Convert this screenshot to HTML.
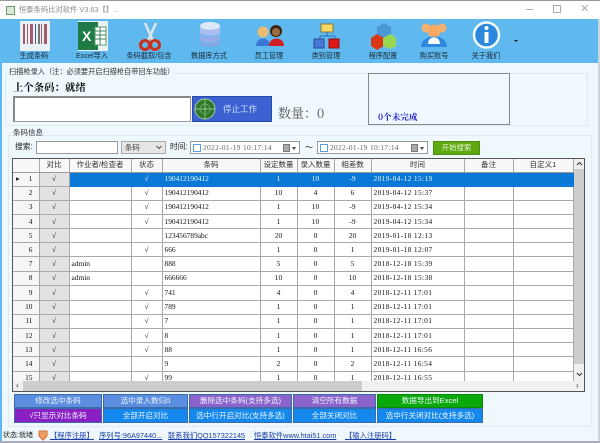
<!DOCTYPE html>
<html><head><meta charset="utf-8"><style>
html,body{margin:0;padding:0;width:600px;height:443px;overflow:hidden;background:#eff8fc}
*{box-sizing:border-box}
body{position:relative;font-family:"Liberation Sans","WenQuanYi Zen Hei","Noto Sans CJK SC",sans-serif;font-size:7.5px;color:#222}
.a{position:absolute;white-space:nowrap}
.tl{font-size:7.2px;text-align:center;color:#1c2a38;width:70px;top:50px;line-height:12px}
table{border-collapse:collapse;table-layout:fixed;position:absolute;left:13px;top:159px;width:560px}
td,th{padding:0;height:14.17px;line-height:12px;border-right:1px solid #a8a8a8;border-bottom:1px solid #aaa;text-align:center;font:400 7.4px/12px "Liberation Serif",serif;color:#111;overflow:hidden;white-space:nowrap;background:#fff}
tr:nth-child(10) td{height:15px}
th{height:13px;font:400 7.5px/12px "Liberation Sans","WenQuanYi Zen Hei","Noto Sans CJK SC",sans-serif;background:#f8f8f8;color:#333;border-bottom:1px solid #999}
td.n{background:#f6f6f6;text-align:right;padding-right:6px;border-right:1px solid #a8a8a8}
td.c{background:#e2e2e2;border:1px solid #f6f6f6;border-right:1px solid #a8a8a8;border-bottom:1px solid #aaa}
td.l{text-align:left;padding-left:2px}
td.d{text-align:left;padding-left:2px;letter-spacing:.37px}
tr.s td:not(.n):not(.c){background:#0a78d6;color:#e8f4ff;border-color:#0a78d6}
.b{position:absolute;color:#eef6ff;text-align:center;font-size:7.6px;line-height:12px;border:1px solid #3b6ca8;white-space:nowrap;overflow:hidden}
.lk{color:#1a3ea8;text-decoration:underline}
.ip{position:absolute;background:#fff;border:1px solid #9a9a9a}
.dt{position:absolute;background:#fff;border:1px solid #9a9a9a;height:13px;font:7.4px/11px "Liberation Serif",serif;letter-spacing:.33px;color:#666;padding-left:12px}
.dt i{position:absolute;left:2px;top:2px;width:8px;height:8px;border:1px solid #5a9fd8;background:#fff}
.dt b{position:absolute;right:9px;top:2px;width:7px;height:8px;background:#aaa;border:1px solid #777}
.dt u{position:absolute;right:3px;top:5px;border:2.5px solid transparent;border-top:3px solid #444;border-bottom:0}
.fs{position:absolute;border:1px solid #dfe9ee}
</style></head><body>
<div class="a" style="left:0;top:0;width:600px;height:19px;background:#fff;border-top:1px solid #999"></div>
<div class="a" style="left:6px;top:6px;width:9px;height:9px;background:#dfe8d8;border:1px solid #6a9a70"></div>
<div class="a" style="left:19px;top:4px;font-size:7.3px;line-height:12px;color:#8b8b8b">恒泰条码比对软件 V3.63【】..</div>
<div class="a" style="left:526px;top:9px;width:7px;height:1px;background:#aaa"></div>
<div class="a" style="left:553px;top:5px;width:8px;height:8px;border:1px solid #aaa"></div>
<div class="a" style="left:580px;top:2px;font-size:11px;line-height:15px;color:#aaa">✕</div>
<div class="a" style="left:0;top:19px;width:600px;height:44px;background:#5fb9ef"></div>
<div class="a" style="left:0;top:19px;width:2px;height:424px;background:#5fb9ef"></div>
<div class="a" style="left:598px;top:19px;width:2px;height:424px;background:#c9d6dc"></div>
<div class="a" style="left:0;top:441px;width:600px;height:2px;background:#aab"></div>
<svg class="a" style="left:0;top:19px" width="600" height="32" viewBox="0 19 600 32">
<rect x="20" y="21" width="30" height="30" fill="#e8f2f6"/>
<g fill="#a85a6a"><rect x="23" y="24" width="2" height="20"/><rect x="27" y="24" width="1" height="20"/><rect x="30" y="24" width="3" height="20"/><rect x="35" y="24" width="1" height="20" fill="#558"/><rect x="38" y="24" width="2" height="20" fill="#777"/><rect x="41" y="24" width="1" height="20"/><rect x="44" y="24" width="3" height="20"/></g>
<rect x="78" y="21" width="30" height="30" fill="#e8f2f6"/><rect x="78" y="22" width="20" height="28" fill="#1f7a45"/><rect x="95" y="27" width="11" height="18" fill="#fff" stroke="#5a9a70"/><path d="M95 31h11M95 35h11M95 39h11M100 27v18" stroke="#3d8a58"/><text x="82" y="41" font-size="14" font-weight="700" fill="#fff" font-family="Liberation Sans">X</text>
<path d="M145 23l9 20M156 23l-9 20" stroke="#dfe4ea" stroke-width="2.5" fill="none"/><circle cx="145" cy="45" r="4.5" fill="none" stroke="#c8321e" stroke-width="3"/><circle cx="155" cy="45" r="4.5" fill="none" stroke="#c8321e" stroke-width="3"/>
<ellipse cx="210" cy="26" rx="10" ry="4" fill="#dfe8f8"/><path d="M200 26v6c0 5 20 5 20 0v-6c0 5-20 5-20 0z" fill="#a9bdee"/><path d="M200 33v6c0 5 20 5 20 0v-6c0 5-20 5-20 0z" fill="#96aee8"/><path d="M200 40v3c0 5 20 5 20 0v-3c0 5-20 5-20 0z" fill="#8aa4e4"/>
<circle cx="263" cy="32" r="5.5" fill="#eebc70"/><path d="M256 46c0-10 14-10 14 0z" fill="#3a78d8"/><circle cx="276" cy="31" r="6" fill="#3a2418"/><circle cx="276" cy="32" r="4" fill="#a06a3a"/><path d="M269 46c0-10 15-10 15 0z" fill="#d01f24"/>
<rect x="321" y="24" width="12" height="8" fill="#f6d860" stroke="#8a7a30"/><path d="M327 32v4M320 36h15M320 36v3M335 36v3" stroke="#2f6ab0" fill="none"/><rect x="314" y="39" width="10" height="9" fill="#4a78d8" stroke="#2a4a90"/><rect x="329" y="39" width="10" height="9" fill="#e01818" stroke="#901010"/>
<path d="M377 27l7-4 7 4v8l-7 4-7-4z" fill="#4a98d8"/><path d="M371 38l6-4 7 4v8l-7 4-6-4z" fill="#d83818"/><path d="M383 38l7-4 6 4v8l-6 3-7-3z" fill="#98d850"/>
<circle cx="434" cy="31" r="6.500" fill="#f8a860"/><circle cx="442" cy="28" r="4.500" fill="#f6b070"/><circle cx="426" cy="28" r="4.500" fill="#f6b070"/><path d="M421 47c0-14 26-14 26 0z" fill="#2f88e0"/><path d="M428 44c0-9 12-9 12 0z" fill="#f4f8ff"/>
<circle cx="486.500" cy="35" r="12.500" fill="#2a88dd" stroke="#f2f8fc" stroke-width="2.500"/><circle cx="486.500" cy="28" r="2" fill="#fff"/><rect x="484.500" y="32" width="4" height="11" fill="#fff"/>
<path d="M514 40h4l-2 2z" fill="#111"/>
</svg>
<div class="a tl" style="left:-1px">生成条码</div>
<div class="a tl" style="left:57px">Excel导入</div>
<div class="a tl" style="left:114px">条码截取/包含</div>
<div class="a tl" style="left:174px">数据库方式</div>
<div class="a tl" style="left:234px">员工管理</div>
<div class="a tl" style="left:291px">类别管理</div>
<div class="a tl" style="left:348px">程序配置</div>
<div class="a tl" style="left:399px">购买账号</div>
<div class="a tl" style="left:451px">关于我们</div>

<div class="fs" style="left:5px;top:73px;width:583px;height:53px"></div>
<div class="a" style="left:9px;top:66px;font-size:7.2px;line-height:12px;background:#eff8fc;color:#333">扫描枪录入（注：必须要开启扫描枪自带回车功能）</div>
<div class="a" style="left:13px;top:79px;font:700 10.4px/16px 'Noto Serif CJK SC',serif;color:#111">上个条码：就绪</div>
<div class="ip" style="left:13px;top:96px;width:178px;height:26px;border-top:2px solid #888;border-left:2px solid #888"></div>
<div class="a" style="left:192px;top:96px;width:80px;height:26px;background:#3b62d0;border:1px solid #2a4aa8"></div>
<svg class="a" style="left:194px;top:98px" width="24" height="24"><circle cx="11" cy="11" r="10" fill="#2c7a28" stroke="#a8c8a0"/><path d="M11 1v20M1 11h20" stroke="#b8d8b0" stroke-width=".7"/><circle cx="11" cy="11" r="5" fill="none" stroke="#7ab070" stroke-width=".7"/></svg>
<div class="a" style="left:223px;top:103px;font-size:8.5px;line-height:13px;color:#cfe0fa">停止工作</div>
<div class="a" style="left:278px;top:104px;font:13px/18px 'Noto Serif CJK SC',serif;color:#555">数量：0</div>
<div class="a" style="left:368px;top:73px;width:142px;height:52px;border:1px solid #888;background:#eff8fc"></div>
<div class="a" style="left:378px;top:111px;font:700 8.6px/12px 'Noto Serif CJK SC',serif;color:#1a1ac8">0个未完成</div>

<div class="fs" style="left:8px;top:135px;width:584px;height:292px"></div>
<div class="a" style="left:13px;top:127px;font-size:7.5px;line-height:12px;background:#eff8fc;color:#333">条码信息</div>
<div class="a" style="left:15px;top:141px;font-size:7.8px;line-height:12px">搜索:</div>
<div class="ip" style="left:36px;top:141px;width:82px;height:13px"></div>
<div class="a" style="left:121px;top:141px;width:45px;height:13px;background:#e6e6e6;border:1px solid #aaa;font-size:7.4px;line-height:11px;padding-left:3px;color:#444">条码<svg style="position:absolute;right:3px;top:3px" width="6" height="5"><path d="M.5 1l2.500 2.500L5.500 1" fill="none" stroke="#555"/></svg></div>
<div class="a" style="left:170px;top:141px;font-size:7.8px;line-height:12px">时间:</div>
<div class="dt" style="left:190px;top:141px;width:110px"><i></i>2022-01-19 10:17:14<b></b><u></u></div>
<div class="a" style="left:305px;top:141px;font-size:8px;line-height:13px">～</div>
<div class="dt" style="left:317px;top:141px;width:111px"><i></i>2022-01-19 10:17:14<b></b><u></u></div>
<div class="a" style="left:433px;top:141px;width:47px;height:14px;background:#5ea812;border:1px solid #4f8f10;color:#e8f6d0;text-align:center;font-size:7.4px;line-height:12px">开始搜索</div>

<div class="a" style="left:12px;top:158px;width:573px;height:234px;border:1px solid #555;background:#fff;overflow:hidden">
<table style="left:0;top:0">
<colgroup><col style="width:26px"><col style="width:30px"><col style="width:62px"><col style="width:31px"><col style="width:98px"><col style="width:37px"><col style="width:37px"><col style="width:37px"><col style="width:93px"><col style="width:49px"><col style="width:60px"></colgroup>
<tr><th></th><th>对比</th><th>作业者/检查者</th><th>状态</th><th>条码</th><th>设定数量</th><th>录入数量</th><th>相差数</th><th>时间</th><th>备注</th><th>自定义1</th></tr>
<tr class="s"><td class="n"><span style="float:left;padding-left:3px;color:#222">▸</span>1</td><td class="c">√</td><td></td><td>√</td><td class="l">190412190412</td><td>1</td><td>10</td><td>-9</td><td class="d">2019-04-12 15:19</td><td></td><td></td></tr>
<tr><td class="n">2</td><td class="c">√</td><td></td><td>√</td><td class="l">190412190412</td><td>10</td><td>4</td><td>6</td><td class="d">2019-04-12 15:37</td><td></td><td></td></tr>
<tr><td class="n">3</td><td class="c">√</td><td></td><td>√</td><td class="l">190412190412</td><td>1</td><td>10</td><td>-9</td><td class="d">2019-04-12 15:34</td><td></td><td></td></tr>
<tr><td class="n">4</td><td class="c">√</td><td></td><td>√</td><td class="l">190412190412</td><td>1</td><td>10</td><td>-9</td><td class="d">2019-04-12 15:34</td><td></td><td></td></tr>
<tr><td class="n">5</td><td class="c">√</td><td></td><td></td><td class="l">123456789abc</td><td>20</td><td>0</td><td>20</td><td class="d">2019-01-18 12:13</td><td></td><td></td></tr>
<tr><td class="n">6</td><td class="c">√</td><td></td><td>√</td><td class="l">666</td><td>1</td><td>0</td><td>1</td><td class="d">2019-01-18 12:07</td><td></td><td></td></tr>
<tr><td class="n">7</td><td class="c">√</td><td class="l">admin</td><td></td><td class="l">888</td><td>5</td><td>0</td><td>5</td><td class="d">2018-12-18 15:39</td><td></td><td></td></tr>
<tr><td class="n">8</td><td class="c">√</td><td class="l">admin</td><td></td><td class="l">666666</td><td>10</td><td>0</td><td>10</td><td class="d">2018-12-18 15:38</td><td></td><td></td></tr>
<tr><td class="n">9</td><td class="c">√</td><td></td><td>√</td><td class="l">741</td><td>4</td><td>0</td><td>4</td><td class="d">2018-12-11 17:01</td><td></td><td></td></tr>
<tr><td class="n">10</td><td class="c">√</td><td></td><td>√</td><td class="l">789</td><td>1</td><td>0</td><td>1</td><td class="d">2018-12-11 17:01</td><td></td><td></td></tr>
<tr><td class="n">11</td><td class="c">√</td><td></td><td>√</td><td class="l">7</td><td>1</td><td>0</td><td>1</td><td class="d">2018-12-11 17:01</td><td></td><td></td></tr>
<tr><td class="n">12</td><td class="c">√</td><td></td><td>√</td><td class="l">8</td><td>1</td><td>0</td><td>1</td><td class="d">2018-12-11 17:01</td><td></td><td></td></tr>
<tr><td class="n">13</td><td class="c">√</td><td></td><td>√</td><td class="l">88</td><td>1</td><td>0</td><td>1</td><td class="d">2018-12-11 16:56</td><td></td><td></td></tr>
<tr><td class="n">14</td><td class="c">√</td><td></td><td></td><td class="l">9</td><td>2</td><td>0</td><td>2</td><td class="d">2018-12-11 16:54</td><td></td><td></td></tr>
<tr><td class="n">15</td><td class="c">√</td><td></td><td>√</td><td class="l">99</td><td>1</td><td>0</td><td>1</td><td class="d">2018-12-11 16:55</td><td></td><td></td></tr>
</table>
<div class="a" style="left:0;top:222px;width:571px;height:10px;background:#f0f0f0"></div>
<div class="a" style="left:10px;top:222px;width:339px;height:10px;background:#cdcdcd"></div>
<div class="a" style="left:3px;top:221px;font-size:8px;line-height:11px;color:#333">‹</div>
<div class="a" style="left:563px;top:221px;font-size:8px;line-height:11px;color:#333">›</div>
<div class="a" style="left:561px;top:0;width:10px;height:222px;background:#f0f0f0"></div>
<div class="a" style="left:561px;top:10px;width:10px;height:195px;background:#cdcdcd"></div>
<svg class="a" style="left:563px;top:2px" width="7" height="6"><path d="M1 4l2.500-2.500L6 4" fill="none" stroke="#333"/></svg>
<svg class="a" style="left:563px;top:212px" width="7" height="6"><path d="M1 2l2.500 2.500L6 2" fill="none" stroke="#333"/></svg>
</div>

<div class="b" style="left:14px;top:394px;width:88px;height:14px;background:#5b8de0">修改选中条码</div>
<div class="b" style="left:103px;top:394px;width:85px;height:14px;background:#5b8de0">选中录入数归0</div>
<div class="b" style="left:189px;top:394px;width:103px;height:14px;background:#8c63cc">删除选中条码(支持多选)</div>
<div class="b" style="left:293px;top:394px;width:83px;height:14px;background:#8c63cc">清空所有数据</div>
<div class="b" style="left:377px;top:394px;width:106px;height:14px;background:#0aa80a;border-color:#088a08">数据导出到Excel</div>
<div class="b" style="left:14px;top:408px;width:88px;height:15px;background:#8a1fc4;line-height:13px">√只显示对比条码</div>
<div class="b" style="left:103px;top:408px;width:85px;height:15px;background:#1488ec;line-height:13px">全部开启对比</div>
<div class="b" style="left:189px;top:408px;width:103px;height:15px;background:#1488ec;line-height:13px">选中行开启对比(支持多选)</div>
<div class="b" style="left:293px;top:408px;width:83px;height:15px;background:#1488ec;line-height:13px">全部关闭对比</div>
<div class="b" style="left:377px;top:408px;width:106px;height:15px;background:#1488ec;line-height:13px">选中行关闭对比(支持多选)</div>

<div class="a" style="left:3px;top:430px;font-size:7px;line-height:12px;color:#222">状态:就绪</div>
<svg class="a" style="left:38px;top:430px" width="10" height="11"><path d="M1 1h8v5l-4 4-4-4z" fill="#f0a060" stroke="#d87030"/></svg>
<div class="a lk" style="left:50px;top:430px;font-size:7.3px;line-height:12px">【程序注册】</div>
<div class="a lk" style="left:99px;top:430px;font-size:7.3px;line-height:12px">序列号:96A97440...</div>
<div class="a lk" style="left:168px;top:430px;font-size:7.3px;line-height:12px">联系我们QQ157322145</div>
<div class="a lk" style="left:254px;top:430px;font-size:7.3px;line-height:12px">恒泰软件www.htai51.com</div>
<div class="a lk" style="left:345px;top:430px;font-size:7.3px;line-height:12px">【输入注册码】</div>
</body></html>
